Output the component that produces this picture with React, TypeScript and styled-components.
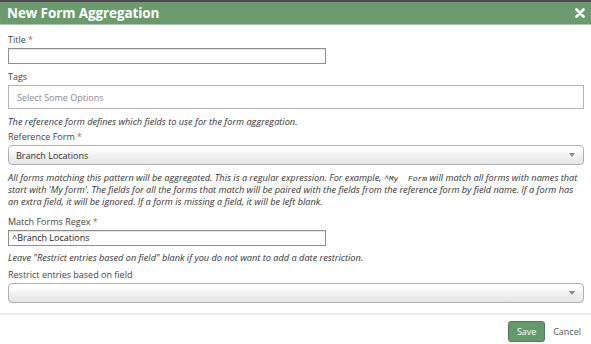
import React from 'react'
import styled, { createGlobalStyle } from 'styled-components'

const GlobalStyle = createGlobalStyle`
  html, body {
    margin: 0;
    padding: 0;
    background: #ffffff;
  }
  body {
    font-family: 'Open Sans', 'Liberation Sans', sans-serif;
    color: #333333;
  }
`

const Dialog = styled.div`
  width: 591px;
  height: 344px;
  display: flex;
  flex-direction: column;
  border-top: 2px solid #4b4b4b;
  box-sizing: border-box;
  overflow: hidden;
`

const TitleBar = styled.div`
  height: 22px;
  background: #6a9a6d;
  border-bottom: 1px solid #a9c9ab;
  display: flex;
  align-items: center;
  justify-content: space-between;
  padding: 0 6px 0 7px;
  color: #ffffff;

  h1 {
    margin: 0;
    font-size: 13.5px;
    font-weight: 700;
    letter-spacing: -0.1px;
  }
`

const CloseIcon = styled.svg`
  width: 10px;
  height: 10px;
`

const Body = styled.div`
  padding: 9px 8px 0 8px;
  display: flex;
  flex-direction: column;
`

const Label = styled.label`
  display: block;
  font-size: 9px;
  line-height: 12px;
  color: #444444;
  margin-bottom: 2px;

  em {
    font-style: normal;
    color: #d9534f;
  }
`

const Hint = styled.p<{ $gap?: number }>`
  margin: 0 0 ${(p) => p.$gap ?? 3}px 0;
  font-size: 9.2px;
  line-height: 12px;
  font-style: italic;
  color: #333333;

  code {
    font-family: 'Liberation Mono', monospace;
    font-style: italic;
    font-size: 8px;
    line-height: 1;
    white-space: pre;
  }
`

const Field = styled.div<{ $gap?: number }>`
  margin-bottom: ${(p) => p.$gap ?? 8}px;
`

const TextInput = styled.div<{ $wide?: boolean }>`
  box-sizing: border-box;
  width: ${(p) => (p.$wide ? '576px' : '318px')};
  height: 16px;
  border: 1px solid #8f8f8f;
  box-shadow: inset 0 1px 1px rgba(0, 0, 0, 0.12);
  font-size: 9px;
  line-height: 14px;
  padding: 0 3px;
  color: #222222;
`

const TagBox = styled.div`
  box-sizing: border-box;
  width: 576px;
  height: 24px;
  border: 1px solid #b5b5b5;
  display: flex;
  align-items: center;
  padding: 0 8px;
  font-size: 9px;
  color: #8a8a8a;
`

const Select = styled.div`
  box-sizing: border-box;
  width: 576px;
  height: 20px;
  border: 1px solid #b0b0b0;
  border-radius: 4px;
  background: linear-gradient(#ffffff 20%, #f2f2f2 50%, #e6e6e6 100%);
  display: flex;
  align-items: center;
  justify-content: space-between;
  padding: 0 8px 0 7px;
  font-size: 9px;
  color: #333333;
`

const Caret = styled.span`
  width: 0;
  height: 0;
  border-left: 3px solid transparent;
  border-right: 3px solid transparent;
  border-top: 4px solid #888888;
`

const Footer = styled.div`
  margin-top: auto;
  border-top: 2px solid #ececec;
  height: 29px;
  display: flex;
  align-items: center;
  justify-content: flex-end;
  gap: 8px;
  padding-right: 10px;
`

const SaveButton = styled.button`
  width: 37px;
  height: 21px;
  background: #65986a;
  border: 1px solid #4d7d52;
  border-radius: 3px;
  color: #ffffff;
  font-family: 'Open Sans', 'Liberation Sans', sans-serif;
  font-size: 9px;
  padding: 0;
  margin-top: 4px;
`

const CancelLink = styled.span`
  font-size: 9px;
  color: #555555;
  margin-top: 4px;
`

export default function App() {
  return (
    <>
      <GlobalStyle />
      <Dialog>
        <TitleBar>
          <h1>New Form Aggregation</h1>
          <CloseIcon viewBox="0 0 10 10">
            <path d="M1.5 1.5 L8.5 8.5 M8.5 1.5 L1.5 8.5" stroke="#ffffff" strokeWidth="2.6" strokeLinecap="round" />
          </CloseIcon>
        </TitleBar>
        <Body>
          <Field $gap={7}>
            <Label>
              Title <em>*</em>
            </Label>
            <TextInput />
          </Field>
          <Field $gap={7}>
            <Label>Tags</Label>
            <TagBox>Select Some Options</TagBox>
          </Field>
          <Hint>The reference form defines which fields to use for the form aggregation.</Hint>
          <Field $gap={7}>
            <Label>
              Reference Form <em>*</em>
            </Label>
            <Select>
              <span>Branch Locations</span>
              <Caret />
            </Select>
          </Field>
          <Hint $gap={8}>
            All forms matching this pattern will be aggregated. This is a regular expression. For example, <code>^My  Form</code> will
            match all forms with names that start with 'My form'. The fields for all the forms that match will be paired with the
            fields from the reference form by field name. If a form has an extra field, it will be ignored. If a form is missing a
            field, it will be left blank.
          </Hint>
          <Field $gap={6}>
            <Label>
              Match Forms Regex <em>*</em>
            </Label>
            <TextInput>^Branch Locations</TextInput>
          </Field>
          <Hint $gap={5}>Leave "Restrict entries based on field" blank if you do not want to add a date restriction.</Hint>
          <Field>
            <Label>Restrict entries based on field</Label>
            <Select>
              <span />
              <Caret />
            </Select>
          </Field>
        </Body>
        <Footer>
          <SaveButton>Save</SaveButton>
          <CancelLink>Cancel</CancelLink>
        </Footer>
      </Dialog>
    </>
  )
}
